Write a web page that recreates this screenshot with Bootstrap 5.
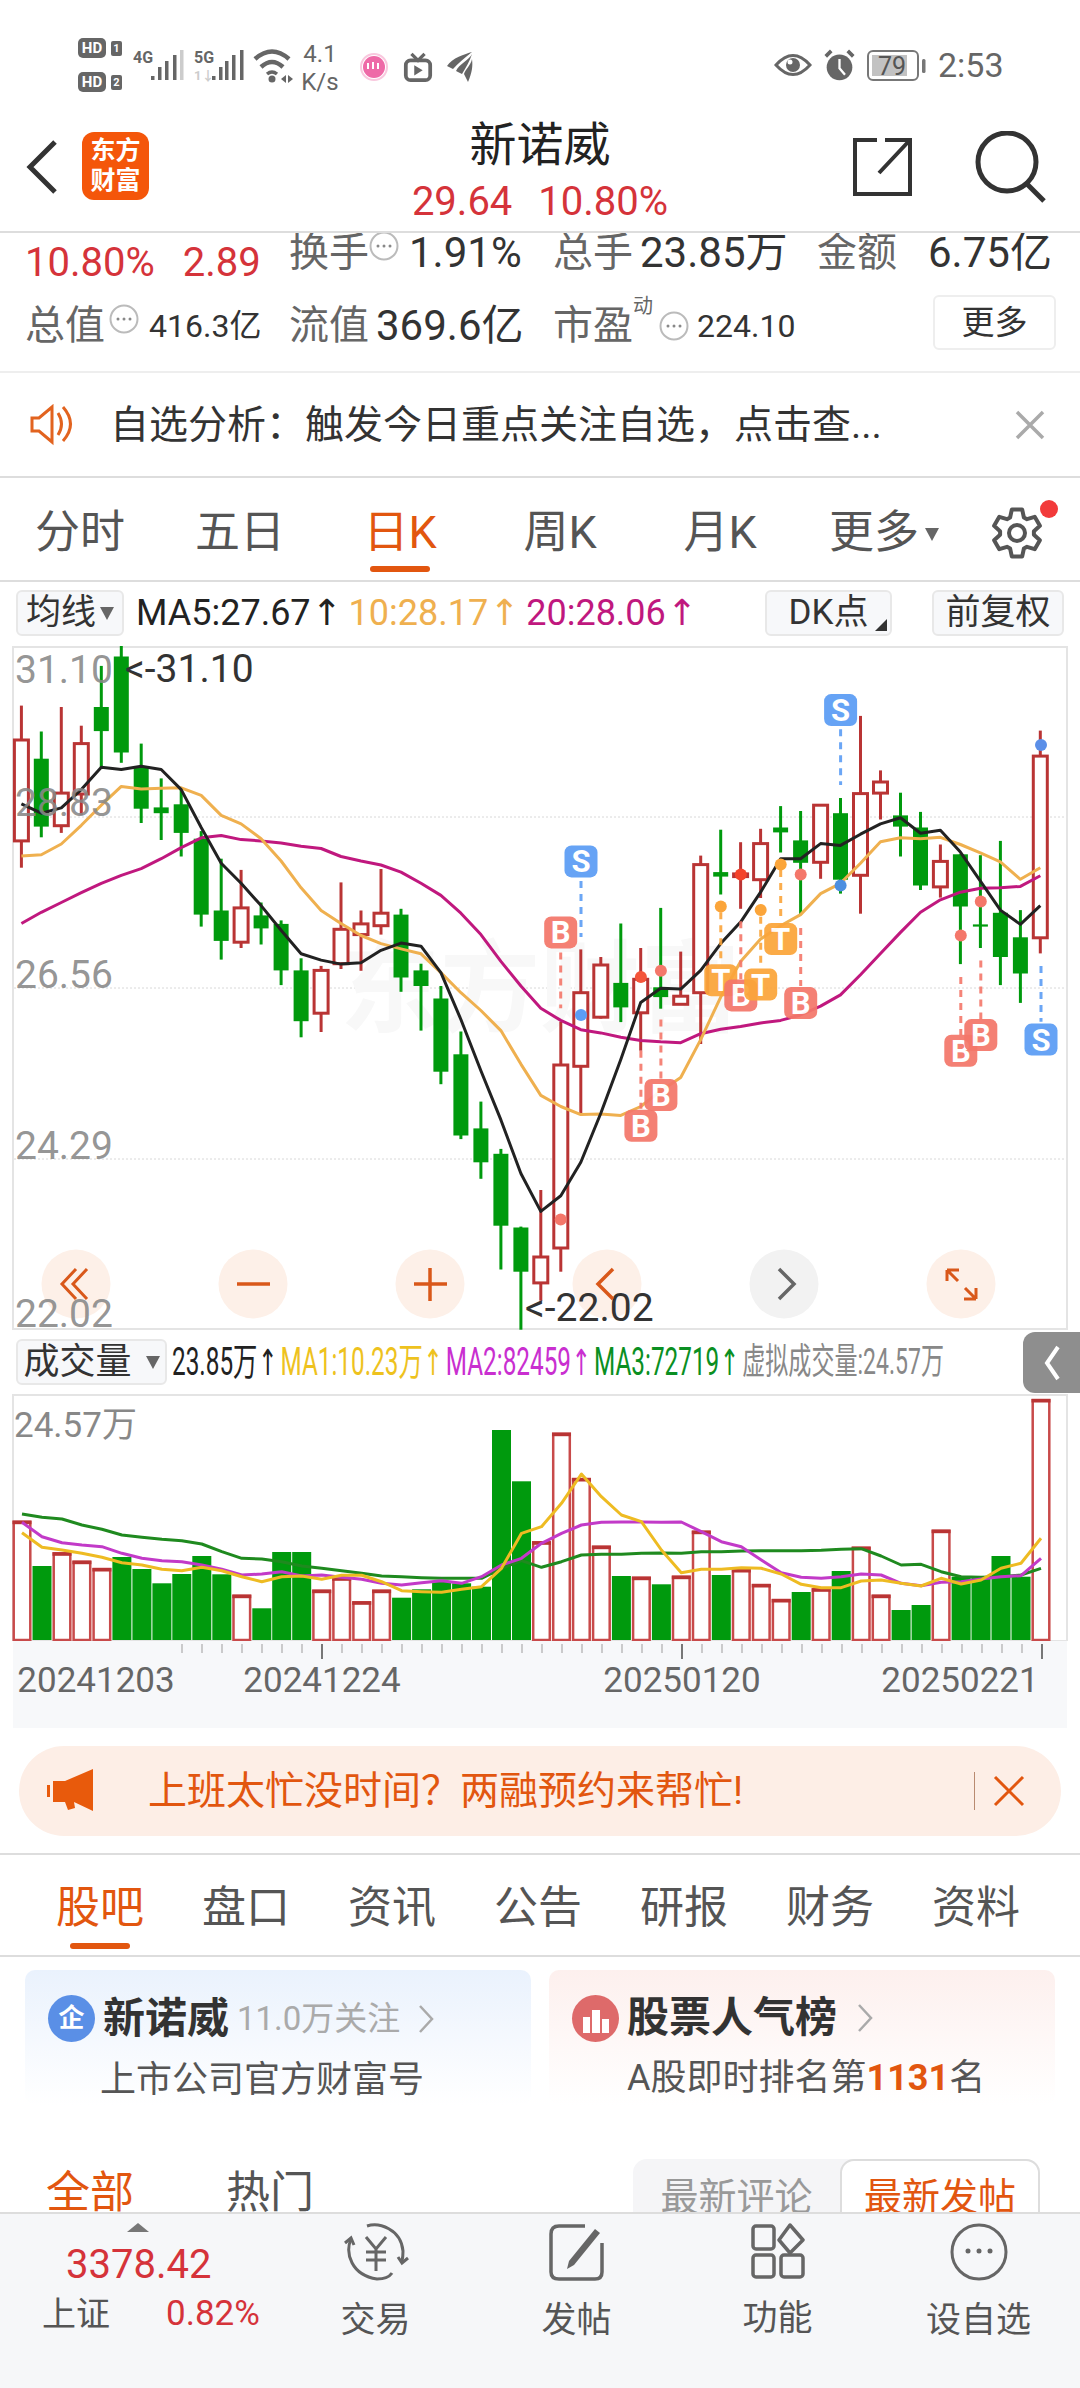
<!DOCTYPE html>
<html lang="zh-CN">
<head>
<meta charset="UTF-8">
<meta name="viewport" content="width=device-width, initial-scale=1.0">
<title>新诺威</title>
<link href="https://cdn.jsdelivr.net/npm/bootstrap@5.3.0/dist/css/bootstrap.min.css" rel="stylesheet">
<style>
html, body { width: 1080px; height: 2388px; overflow: hidden; }
body { font-family: Roboto, "Noto Sans CJK SC", sans-serif; color: #333; background: #fff; }
svg text { font-family: Roboto, "Noto Sans CJK SC", sans-serif; }
svg { flex: none; }
.page-main { height: 2212px; overflow: hidden; position: relative; }

/* status bar */
.status-bar { height: 90px; padding: 38px 78px 0 78px; color: #666; }
.hd-col { width: 48px; gap: 12px; }
.hd-item { height: 22px; gap: 5px; }
.hd-tag { background: #666; color: #fff; font: 700 15px/20px Roboto, sans-serif; border-radius: 5px; width: 28px; height: 20px; text-align: center; }
.hd-num { background: #666; color: #fff; font: 700 11px/15px Roboto, sans-serif; border-radius: 2px; width: 11px; height: 15px; text-align: center; margin-top: 3px; }
.net-4g { margin: 10px 0 0 7px; }
.net-5g { margin-top: 10px; }
.net-wifi { margin: 10px 0 0 4px; }
.speed { font-size: 24px; line-height: 28px; width: 42px; text-align: center; color: #666; margin: 2px 0 0 -2px; white-space: nowrap; }
.ic-pink { margin: 15px 0 0 19px; }
.ic-tv { margin: 14px 0 0 15px; }
.ic-wing { margin: 14px 0 0 14px; }
.status-right { gap: 11px; margin-top: 7px; }
.clock { font-size: 34px; line-height: 40px; color: #666; width: 64px; }

/* top nav */
.top-nav { height: 143px; border-bottom: 2px solid #ddd; position: relative; }
.back-ic { margin: 50px 0 0 25px; }
.brand-tile { width: 67px; height: 68px; background: #f4560a; border-radius: 12px; color: #fff; font-weight: 700; font-size: 25px; line-height: 30px; text-align: center; padding-top: 4px; margin: 42px 0 0 21px; }
.nav-center { padding-top: 28px; pointer-events: none; }
.nav-title { font-size: 47px; line-height: 54px; color: #222; }
.nav-quote { font-size: 40px; line-height: 44px; color: #d5333a; margin-top: 8px; }
.nav-quote span + span { margin-left: 26px; }
.share-ic { margin-top: 47px; }
.search-ic { margin: 41px 32px 0 60px; }

/* stats */
.stat-block { height: 140px; border-bottom: 2px solid #eee; position: relative; overflow: hidden; }
.stat-row { display: grid; grid-template-columns: 264px 264px 264px 1fr; padding-left: 25px; align-items: center; }
.stat-row-a { height: 44px; margin-top: -12px; }
.stat-row-b { height: 60px; margin-top: 31px; }
.quote-cell { margin-top: 20px; white-space: nowrap; }
.st-key { font-size: 40px; color: #666; line-height: 44px; }
.st-val { font-size: 42px; color: #333; line-height: 44px; white-space: nowrap; }
.st-val-s { font-size: 32px; color: #333; line-height: 44px; white-space: nowrap; }
.st-red { font-size: 40px; color: #d5333a; line-height: 44px; }
.st-red + .st-red { margin-left: 28px; }
.more-btn { position: absolute; right: 24px; top: 62px; width: 123px; height: 55px; border: 2px solid #eee; border-radius: 6px; font-size: 33px; line-height: 50px; text-align: center; color: #333; background: #fff; padding: 0; }
.sup-mark { font-size: 20px; color: #666; position: relative; top: -20px; line-height: 0; }
.ring-a { margin: -14px 10px 0 0; }
.ring-b { margin: -14px 10px 0 4px; }
.ring-c { margin: 0 8px 0 6px; }
.gap-val-a { margin-left: 7px; }
.gap-val-b { margin-left: 31px; }

/* notice */
.notice-row { height: 105px; border-bottom: 2px solid #ddd; padding: 0 30px; }
.notice-text { font-size: 39px; line-height: 46px; color: #333; margin-left: 30px; white-space: nowrap; }
.notice-x { margin-right: 5px; }

/* period tabs */
.tab-strip { height: 104px; border-bottom: 2px solid #ddd; }
.tab-cell { width: 160px; text-align: center; font-size: 45px; line-height: 50px; color: #555; position: relative; padding-top: 30px; white-space: nowrap; }
.tab-cell.on { color: #e2560f; }
.tab-cell.on::after { content: ""; position: absolute; left: 50%; margin-left: -30px; top: 88px; width: 60px; height: 6px; border-radius: 3px; background: #e2560f; }
.tab-more { padding-left: 8px; }
.tri-down { display: inline-block; width: 0; height: 0; border-left: 7px solid transparent; border-right: 7px solid transparent; border-top: 13px solid #666; vertical-align: middle; }
.tab-cell .tri-down { margin: 0 0 4px 6px; }
.gear-cell { width: 120px; position: relative; padding-top: 29px; padding-left: 31px; }
.red-dot { position: absolute; left: 80px; top: 22px; width: 18px; height: 18px; background: #f23a3a; border-radius: 50%; }

/* ma row */
.ma-row { height: 64px; padding: 8px 16px 0 16px; }
.chip { background: #f7f8fa; border: 2px solid #e8e8e8; border-radius: 6px; color: #333; font-size: 35px; line-height: 42px; height: 46px; text-align: center; white-space: nowrap; flex: none; position: relative; }
.chip-ma { width: 108px; }
.chip-ma .tri-down { margin: 0 0 2px 4px; }
.chip-dk { width: 127px; }
.chip-dk svg { position: absolute; right: 3px; bottom: 3px; }
.chip-fq { width: 132px; margin-left: 40px; }
.chip-vol { width: 151px; display: flex; align-items: center; justify-content: center; font-size: 36px; }
.chip-vol .tri-down { margin-left: 14px; }
.ma-text { font-size: 36px; line-height: 46px; white-space: nowrap; margin-left: 12px; gap: 6px; }
.ma-arrow { display: inline-block; width: 32px; text-align: center; font-family: "DejaVu Sans", sans-serif; font-size: 36px; font-weight: 400; }
.c-black { color: #222; }
.c-orange { color: #efb04f; }
.c-magenta { color: #c0187e; }
.c-mustard { color: #eec21e; }
.c-violet { color: #c92fd0; }
.c-leaf { color: #0a8f22; }

.chart-svg { display: block; width: 1080px; }
.vol-legend { height: 64px; position: relative; padding: 9px 0 0 16px; }
.vol-items { font-size: 38px; line-height: 46px; white-space: nowrap; margin-left: 5px; gap: 4px; transform: scaleX(.64); transform-origin: 0 50%; }
.vol-note { color: #888; font-size: 36px; }
.vol-handle { position: absolute; right: 0; top: 2px; width: 57px; height: 61px; background: #8e8e8e; border-radius: 12px 0 0 12px; display: flex; align-items: center; justify-content: center; }
.axis-wrap { height: 87px; margin: 0 13px; background: #f7f8fa; }

/* promo */
.promo-pill { height: 90px; margin: 18px 19px 17px 19px; background: #fdeee6; border-radius: 45px; padding: 0 36px 0 28px; color: #e2560f; }
.promo-text { font-size: 39px; margin-left: 55px; line-height: 46px; white-space: nowrap; }
.promo-sep { width: 1px; height: 38px; background: #b98a70; margin-right: 18px; }

/* lower tabs */
.sub-tabs { height: 104px; border-top: 2px solid #ddd; border-bottom: 2px solid #ddd; display: grid; grid-template-columns: 27px repeat(7, 146px) 1fr; }
.sub-cell { text-align: center; font-size: 44px; line-height: 50px; color: #555; position: relative; padding-top: 28px; }
.sub-cell.on { color: #e2560f; }
.sub-cell.on::after { content: ""; position: absolute; left: 50%; margin-left: -30px; top: 88px; width: 60px; height: 6px; border-radius: 3px; background: #e2560f; }

/* cards */
.promo-cards { padding: 13px 24px 0 25px; gap: 18px; height: 190px; }
.info-tile { width: 506px; height: 135px; border-radius: 10px; padding: 24px 22px 0 23px; }
.tile-blue { background: linear-gradient(#eaf2fd, #fff); }
.tile-red { background: linear-gradient(#fdf0ee, #fff); }
.tile-round { width: 47px; height: 47px; border-radius: 50%; color: #fff; font-size: 26px; line-height: 47px; text-align: center; flex: none; font-weight: 700; }
.round-blue { background: #5a8fe6; }
.round-red { background: #de6a6a; }
.tile-head { font-size: 42px; font-weight: 700; line-height: 48px; color: #333; margin-left: 8px; white-space: nowrap; }
.tile-sub-mark { font-size: 33px; color: #aaa; margin-left: 8px; white-space: nowrap; }
.tile-chev { margin-left: 18px; }
.tile-chev-b { margin-left: 20px; }
.tile-sub { font-size: 36px; line-height: 44px; color: #555; margin: 14px 0 0 52px; white-space: nowrap; }
.tile-sub-b { margin-left: 55px; }
.tile-sub b { color: #e2560f; font-weight: 700; }

/* feed tabs */
.feed-row { height: 60px; padding: 0 40px 0 46px; margin-top: 12px; }
.feed-tab { font-size: 44px; line-height: 60px; color: #555; margin-right: 92px; padding-top: 4px; }
.feed-tab.on { color: #e2560f; }
.seg-box { width: 407px; height: 80px; background: #f5f5f7; border-radius: 14px; font-size: 38px; }
.seg-off { width: 207px; color: #999; text-align: center; line-height: 76px; }
.seg-on { width: 200px; color: #e2560f; text-align: center; background: #fff; border: 2px solid #ddd; border-radius: 14px; line-height: 72px; }

/* bottom bar */
.foot-bar { height: 176px; background: #f6f7f9; border-top: 2px solid #ddd; }
.foot-quote { width: 275px; position: relative; padding: 30px 0 0 42px; }
.foot-up { width: 0; height: 0; border-left: 11px solid transparent; border-right: 11px solid transparent; border-bottom: 9px solid #777; margin: -21px 0 0 85px; }
.foot-index { font-size: 40px; line-height: 44px; color: #d5333a; margin: 11px 0 0 24px; }
.foot-sub { margin-top: 5px; }
.foot-pct { font-size: 35px; line-height: 44px; color: #d5333a; margin-left: 56px; }
.foot-name { font-size: 34px; line-height: 44px; color: #555; }
.foot-item { width: 201px; text-align: center; padding-top: 9px; color: #555; font-size: 35px; line-height: 40px; }
.foot-item svg { display: block; margin: 0 auto 20px auto; }
</style>
</head>
<body>
<div class="page-main">
  <!-- status bar -->
  <div class="status-bar d-flex align-items-start">
    <div class="d-flex flex-column hd-col">
      <div class="d-flex hd-item"><div class="hd-tag">HD</div><div class="hd-num">1</div></div>
      <div class="d-flex hd-item"><div class="hd-tag">HD</div><div class="hd-num">2</div></div>
    </div>
    <svg class="net-4g" width="56" height="34" viewBox="0 0 56 34">
      <text x="0" y="15" font-size="16" font-weight="700" fill="#666">4G</text>
      <g fill="#666"><rect x="18" y="28" width="3.5" height="4"/><rect x="25" y="19" width="3.5" height="13"/><rect x="32" y="13" width="3.5" height="19"/><rect x="40" y="7" width="3.5" height="25"/><rect x="47" y="2" width="3.5" height="30" fill="#ccc"/></g>
    </svg>
    <svg class="net-5g" width="60" height="34" viewBox="0 0 60 34">
      <text x="5" y="15" font-size="16" font-weight="700" fill="#666">5G</text>
      <text x="5" y="32" font-size="13" font-weight="700" fill="#ccc">1↓</text>
      <g fill="#666"><rect x="23" y="28" width="3.5" height="4"/><rect x="30" y="19" width="3.5" height="13"/><rect x="36" y="13" width="3.5" height="19"/><rect x="43" y="7" width="3.5" height="25"/><rect x="51" y="2" width="3.5" height="30"/></g>
    </svg>
    <svg class="net-wifi" width="48" height="36" viewBox="0 0 48 36" fill="none" stroke="#666" stroke-width="4.5">
      <path d="M2 11 Q19 -4 36 11"/><path d="M8 19 Q19 9 30 19"/><path d="M14 26 Q19 22 24 26" stroke-width="3.5"/>
      <circle cx="19" cy="31" r="3.5" fill="#666" stroke="none"/>
      <path d="M28 31l5-4v8zM35 27l5 4-5 4z" fill="#666" stroke="none"/>
    </svg>
    <div class="speed">4.1<br>K/s</div>
    <svg class="ic-pink" width="28" height="28" viewBox="0 0 28 28"><circle cx="14" cy="14" r="11" fill="#ee6aa7"/><circle cx="14" cy="14" r="13" fill="none" stroke="#f9c8de" stroke-width="2"/><path d="M8 10v6M13 9v7M18 10v6" stroke="#fff" stroke-width="2"/></svg>
    <svg class="ic-tv" width="30" height="30" viewBox="0 0 30 32"><path d="M8 2l7 7 7-7" fill="none" stroke="#666" stroke-width="3.5"/><rect x="2" y="9" width="26" height="21" rx="5" fill="none" stroke="#666" stroke-width="4"/><path d="M11 14v11l9-5.5z" fill="#666"/></svg>
    <svg class="ic-wing" width="26" height="30" viewBox="0 0 26 30"><path d="M25 0C18 2 5 6 0 14l6 3C11 11 18 6 25 0zM25 2C22 8 12 12 9 19l6 3C19 15 23 9 25 2zM25 7C24 13 18 18 17 22l4 8C25 21 26 14 25 7z" fill="#666"/></svg>
    <div class="ms-auto d-flex align-items-center status-right">
      <svg width="38" height="24" viewBox="0 0 38 24"><path d="M2 12Q19 -7 36 12Q19 31 2 12z" fill="none" stroke="#666" stroke-width="3"/><circle cx="19" cy="12" r="7" fill="#666"/><circle cx="16" cy="9" r="2.5" fill="#fff"/></svg>
      <svg width="33" height="33" viewBox="0 0 36 36"><circle cx="18" cy="20" r="14" fill="#666"/><path d="M18 11v10l6 7" fill="none" stroke="#fff" stroke-width="2.5"/><path d="M3 8l6-6M33 8l-6-6" stroke="#666" stroke-width="4"/></svg>
      <svg width="60" height="31" viewBox="0 0 60 31"><rect x="1" y="1" width="50" height="29" rx="5" fill="none" stroke="#777" stroke-width="2"/><rect x="5" y="5" width="35" height="21" fill="#c2c2c2"/><text x="11" y="25" font-size="25" fill="#555">79</text><rect x="55" y="9" width="3.5" height="14" rx="1.5" fill="#777"/></svg>
      <div class="clock">2:53</div>
    </div>
  </div>

  <!-- top nav -->
  <div class="top-nav d-flex">
    <svg class="back-ic" width="36" height="54" viewBox="0 0 36 54"><path d="M30 2L5 27l25 25" fill="none" stroke="#333" stroke-width="5"/></svg>
    <div class="brand-tile">东方<br>财富</div>
    <div class="position-absolute top-0 start-0 w-100 text-center nav-center">
      <div class="nav-title">新诺威</div>
      <div class="nav-quote"><span>29.64</span><span>10.80%</span></div>
    </div>
    <div class="ms-auto d-flex">
      <svg class="share-ic" width="62" height="60" viewBox="0 0 62 60" fill="none" stroke="#333" stroke-width="4"><path d="M25 3H3v54h55V25"/><path d="M33 3h25v24M57 4L27 36"/></svg>
      <svg class="search-ic" width="74" height="72" viewBox="0 0 74 72"><circle cx="33" cy="31" r="29" fill="none" stroke="#333" stroke-width="5"/><path d="M53 53l17 17" stroke="#333" stroke-width="5"/></svg>
    </div>
  </div>

  <!-- stats -->
  <div class="stat-block">
    <div class="stat-row stat-row-a">
      <div class="quote-cell"><span class="st-red">10.80%</span><span class="st-red">2.89</span></div>
      <div class="d-flex align-items-center"><span class="st-key">换手</span><svg class="ring-a" width="30" height="30" viewBox="0 0 30 30"><use href="#dotRing"/></svg><span class="st-val">1.91%</span></div>
      <div class="d-flex align-items-center"><span class="st-key">总手</span><span class="st-val gap-val-a">23.85万</span></div>
      <div class="d-flex align-items-center"><span class="st-key">金额</span><span class="st-val gap-val-b">6.75亿</span></div>
    </div>
    <div class="stat-row stat-row-b">
      <div class="d-flex align-items-center"><span class="st-key">总值</span><svg class="ring-b" width="30" height="30" viewBox="0 0 30 30"><use href="#dotRing"/></svg><span class="st-val-s">416.3亿</span></div>
      <div class="d-flex align-items-center"><span class="st-key">流值</span><span class="st-val gap-val-a">369.6亿</span></div>
      <div class="d-flex align-items-center"><span class="st-key">市盈</span><span class="sup-mark">动</span><svg class="ring-c" width="30" height="30" viewBox="0 0 30 30"><use href="#dotRing"/></svg><span class="st-val-s">224.10</span></div>
    </div>
    <button class="more-btn" type="button">更多</button>
  </div>

  <!-- notice -->
  <div class="notice-row d-flex align-items-center">
    <svg width="50" height="42" viewBox="0 0 50 42" fill="none" stroke="#e2631f" stroke-width="3"><path d="M2 14h7L22 3v35L9 27H2z"/><path d="M28 9q7 11 0 22M33 3q15 17 0 34"/></svg>
    <div class="notice-text">自选分析：触发今日重点关注自选，点击查...</div>
    <svg class="ms-auto notice-x" width="30" height="30" viewBox="0 0 30 30"><path d="M2 2l26 26M28 2L2 28" stroke="#aaa" stroke-width="3.5"/></svg>
  </div>

  <!-- period tabs -->
  <div class="tab-strip d-flex">
    <div class="tab-cell">分时</div>
    <div class="tab-cell">五日</div>
    <div class="tab-cell on">日K</div>
    <div class="tab-cell">周K</div>
    <div class="tab-cell">月K</div>
    <div class="tab-cell tab-more">更多<span class="tri-down"></span></div>
    <div class="gear-cell">
      <svg width="52" height="52" viewBox="0 0 52 52"><path id="gearPath" fill="none" stroke="#555" stroke-width="4" stroke-linejoin="round"/><circle cx="26" cy="26" r="8" fill="none" stroke="#555" stroke-width="4"/></svg>
      <span class="red-dot"></span>
    </div>
  </div>

  <!-- ma row -->
  <div class="ma-row d-flex">
    <div class="chip chip-ma">均线<span class="tri-down"></span></div>
    <div class="ma-text d-flex">
      <span class="c-black">MA5:27.67<span class="ma-arrow">↑</span></span>
      <span class="c-orange">10:28.17<span class="ma-arrow">↑</span></span>
      <span class="c-magenta">20:28.06<span class="ma-arrow">↑</span></span>
    </div>
    <div class="chip chip-dk ms-auto">DK点<svg width="12" height="12" viewBox="0 0 12 12"><path d="M12 0v12H0z" fill="#333"/></svg></div>
    <div class="chip chip-fq">前复权</div>
  </div>

  <!-- k chart -->
  <svg id="kChart" class="chart-svg" height="684" viewBox="0 0 1080 684"></svg>

  <!-- volume legend -->
  <div class="vol-legend d-flex">
    <div class="chip chip-vol">成交量<span class="tri-down"></span></div>
    <div class="vol-items d-flex">
      <span class="c-black">23.85万<span class="ma-arrow">↑</span></span>
      <span class="c-mustard">MA1:10.23万<span class="ma-arrow">↑</span></span>
      <span class="c-violet">MA2:82459<span class="ma-arrow">↑</span></span>
      <span class="c-leaf">MA3:72719<span class="ma-arrow">↑</span></span>
      <span class="vol-note">虚拟成交量:24.57万</span>
    </div>
    <div class="vol-handle"><svg width="18" height="36" viewBox="0 0 18 36"><path d="M15 2L4 18l11 16" fill="none" stroke="#fff" stroke-width="4"/></svg></div>
  </div>

  <!-- volume chart -->
  <svg id="volChart" class="chart-svg" height="247" viewBox="0 0 1080 247"></svg>

  <div class="axis-wrap">
    <svg id="axisSvg" width="1054" height="87" viewBox="13 0 1054 87"></svg>
  </div>

  <!-- promo -->
  <div class="promo-pill d-flex align-items-center">
    <svg width="46" height="46" viewBox="0 0 46 46"><path d="M0 17h3v12H0zM6 13h12L46 1v42L27 34l1 6-7 2-3-8H6z" fill="#e85a0c"/></svg>
    <div class="promo-text">上班太忙没时间？两融预约来帮忙!</div>
    <div class="ms-auto d-flex align-items-center">
      <div class="promo-sep"></div>
      <svg width="32" height="32" viewBox="0 0 32 32"><path d="M2 2l28 28M30 2L2 30" stroke="#e2560f" stroke-width="3"/></svg>
    </div>
  </div>

  <!-- lower tabs -->
  <div class="sub-tabs">
    <div></div>
    <div class="sub-cell on">股吧</div>
    <div class="sub-cell">盘口</div>
    <div class="sub-cell">资讯</div>
    <div class="sub-cell">公告</div>
    <div class="sub-cell">研报</div>
    <div class="sub-cell">财务</div>
    <div class="sub-cell">资料</div>
  </div>

  <!-- cards -->
  <div class="promo-cards d-flex">
    <div class="info-tile tile-blue">
      <div class="d-flex align-items-center">
        <div class="tile-round round-blue">企</div>
        <div class="tile-head">新诺威</div>
        <div class="tile-sub-mark">11.0万关注</div>
        <svg class="tile-chev" width="16" height="30" viewBox="0 0 16 30"><path d="M2 2l12 13L2 28" fill="none" stroke="#aaa" stroke-width="2.5"/></svg>
      </div>
      <div class="tile-sub">上市公司官方财富号</div>
    </div>
    <div class="info-tile tile-red">
      <div class="d-flex align-items-center">
        <div class="tile-round round-red"><svg width="30" height="26" viewBox="0 0 30 26" fill="#fff"><rect x="2" y="10" width="7" height="16"/><rect x="11" y="3" width="8" height="23"/><rect x="21" y="12" width="7" height="14"/></svg></div>
        <div class="tile-head">股票人气榜</div>
        <svg class="tile-chev-b" width="16" height="30" viewBox="0 0 16 30"><path d="M2 2l12 13L2 28" fill="none" stroke="#aaa" stroke-width="2.5"/></svg>
      </div>
      <div class="tile-sub tile-sub-b">A股即时排名第<b>1131</b>名</div>
    </div>
  </div>

  <!-- feed tabs -->
  <div class="feed-row d-flex">
    <div class="feed-tab on">全部</div>
    <div class="feed-tab">热门</div>
    <div class="seg-box ms-auto d-flex">
      <div class="seg-off">最新评论</div>
      <div class="seg-on">最新发帖</div>
    </div>
  </div>
</div>

<!-- bottom bar -->
<div class="foot-bar d-flex">
  <div class="foot-quote">
    <div class="foot-up"></div>
    <div class="foot-index">3378.42</div>
    <div class="d-flex foot-sub"><span class="foot-name">上证</span><span class="foot-pct">0.82%</span></div>
  </div>
  <div class="foot-item">
    <svg width="66" height="58" viewBox="0 0 66 58" fill="none" stroke="#666" stroke-width="3"><path d="M8 16C2 30 8 52 34 56c8 0 13-3 15-6M24 3C36 -1 58 6 60 28c0 3 0 6-1 10"/><path d="M2 20l6-5 3 7M55 34l4 6 6-5" /><path d="M23 14l10 12 10-12M33 26v22M23 29h20M23 37h20"/></svg>
    交易
  </div>
  <div class="foot-item">
    <svg width="56" height="58" viewBox="0 0 56 58" fill="none" stroke="#666" stroke-width="3.5"><path d="M36 3H10Q2 3 2 11v38q0 7 8 7h36q7 0 7-7V20"/><path d="M20 38L46 6l5 4-26 32-7 4z" fill="#666" stroke="none"/></svg>
    发帖
  </div>
  <div class="foot-item">
    <svg width="54" height="56" viewBox="0 0 54 56" fill="none" stroke="#666" stroke-width="3.5"><rect x="2" y="3" width="21" height="23" rx="3"/><path d="M39 2l13 15-13 13-11-13z" stroke-linejoin="round"/><rect x="2" y="32" width="21" height="22" rx="3"/><rect x="30" y="32" width="22" height="22" rx="3"/></svg>
    功能
  </div>
  <div class="foot-item">
    <svg width="58" height="58" viewBox="0 0 58 58" fill="none" stroke="#666" stroke-width="3"><circle cx="29" cy="29" r="27"/><circle cx="18" cy="28" r="2.5" fill="#666" stroke="none"/><circle cx="29" cy="28" r="2.5" fill="#666" stroke="none"/><circle cx="40" cy="28" r="2.5" fill="#666" stroke="none"/></svg>
    设自选
  </div>
</div>

<svg width="0" height="0" class="position-absolute"><defs>
  <g id="dotRing"><circle cx="15" cy="15" r="13.5" fill="none" stroke="#bbb" stroke-width="2"/><circle cx="9" cy="15" r="1.5" fill="#888"/><circle cx="15" cy="15" r="1.5" fill="#888"/><circle cx="21" cy="15" r="1.5" fill="#888"/></g>
</defs></svg>

<script>
  // Daily candles: [up, high, top, bottom, low], y in reference crop units
  const candles = [
    [1,147,224,450,510],[0,205,266,418,442],[1,150,343,416,432],[1,192,232,345,392],[0,58,150,204,285],
    [0,13,37,252,275],[0,232,285,378,410],[0,310,375,388,448],[0,330,368,432,485],[0,428,445,615,642],
    [0,490,606,674,716],[1,515,600,677,690],[0,588,617,646,682],[0,628,636,740,773],[0,713,740,854,890],
    [1,730,740,836,878],[1,543,648,725,737],[1,606,636,660,741],[1,513,612,640,660],[0,602,615,756,788],
    [0,725,740,775,875],[0,775,803,967,995],[0,877,928,1110,1118],[0,1034,1094,1170,1207],[0,1140,1151,1312,1410],
    [0,1314,1316,1415,1545],[1,1232,1382,1440,1480],[1,855,952,1362,1415],[1,693,790,955,1060],[1,710,728,845,848],
    [0,635,768,823,856],[1,690,760,835,920],[0,600,778,800,826],[1,698,798,816,816],[1,483,503,790,905],
    [0,425,520,530,570],[1,453,524,530,602],[1,423,456,537,578],[0,372,420,431,476],[0,383,449,499,615],
    [1,370,370,498,535],[0,354,388,537,568],[1,170,344,527,613],[1,292,318,343,402],[0,342,393,418,485],
    [0,385,420,550,560],[1,458,496,553,577],[0,480,480,597,726],[0,482,637,642,690],[0,450,611,710,773],
    [0,605,666,747,813],[1,203,260,667,702]
  ];
  const ma5 = [367,388,376,335,285,290,283,290,335,420,500,545,595,650,703,717,726,723,695,679,686,745,850,965,1075,1195,1280,1245,1170,1060,940,812,780,782,740,680,632,565,490,490,456,460,435,412,398,433,426,475,540,605,637,595];
  const ma10 = [484,481,457,415,370,328,334,332,331,348,393,412,445,495,555,606,635,662,680,692,703,745,790,830,875,950,1020,1045,1063,1062,1065,1045,1010,980,895,800,720,670,640,615,568,545,500,452,443,445,442,458,477,497,536,510];
  const ma20 = [635,610,588,566,545,527,512,490,465,443,438,447,450,455,462,467,485,495,504,520,545,572,612,660,720,775,825,852,873,880,890,897,900,902,882,872,866,858,852,840,820,795,750,702,655,610,582,565,556,555,552,528];

  const volBars = [[1,605],[0,738],[1,700],[1,725],[1,747],[0,711],[0,747],[0,790],[0,762],[0,708],[0,763],[1,827],[0,865],[0,696],[0,696],[1,812],[1,775],[1,847],[1,812],[0,833],[0,808],[0,783],[0,790],[0,800],[0,330],[0,484],[1,667],[1,341],[1,477],[1,680],[0,768],[1,773],[0,793],[1,770],[1,635],[0,765],[1,750],[1,795],[1,840],[0,816],[1,808],[0,753],[1,683],[1,827],[0,870],[0,855],[1,632],[0,770],[0,770],[0,708],[0,770],[1,240]];
  const volMa1 = [638,682,690,700,712,728,735,748,752,742,752,770,785,770,768,778,766,766,785,812,815,817,808,800,745,640,620,550,462,530,585,605,690,758,748,748,743,745,762,793,803,803,783,780,790,798,775,792,780,745,730,655];
  const volMa2 = [607,650,668,675,680,700,715,722,725,735,748,765,762,755,768,765,772,778,790,795,788,782,790,770,735,715,670,640,615,607,606,606,607,606,635,665,680,720,758,772,775,770,762,765,790,797,787,785,777,770,767,715];
  const volMa3 = [582,592,597,615,628,645,652,658,662,672,695,715,717,725,738,745,752,760,768,770,773,775,775,775,745,722,742,725,705,703,703,700,699,700,695,695,693,692,692,692,691,688,686,708,735,733,755,770,772,770,765,745];

  const kX = i => +(21.35 + 19.98 * i).toFixed(1);
  const kY = z => +(z / 2.24 - 6).toFixed(1);
  const rightX = z => +(540 + z / 2.904).toFixed(1);
  const RED = '#b93434', GREEN = '#009a0d';

  function polyline(xs, ys, color, width) {
    const pts = ys.map((y, i) => xs(i) + ',' + y).join(' ');
    return `<polyline points="${pts}" fill="none" stroke="${color}" stroke-width="${width}" stroke-linejoin="round"/>`;
  }

  function drawKChart() {
    let s = `<rect x="13" y="1" width="1054" height="682" fill="#fff" stroke="#e4e4e4" stroke-width="2"/>`;
    [171, 342, 513].forEach(y => {
      s += `<line x1="14" x2="1066" y1="${y}" y2="${y}" stroke="#d8d8d8" stroke-width="1" stroke-dasharray="2 2"/>`;
    });
    s += `<text x="340" y="378" font-size="100" font-weight="700" fill="#f8f8f8">东方财富</text>`;

    // zoom buttons sit behind the candles
    [[76,'#fdf0e8'],[253,'#fdf0e8'],[430,'#fdf0e8'],[607,'#fdf0e8'],[784,'#f2f2f2'],[961,'#fdf0e8']].forEach(b => {
      s += `<circle cx="${b[0]}" cy="638" r="34.5" fill="${b[1]}"/>`;
    });

    candles.forEach((c, i) => {
      const x = kX(i), color = c[0] ? RED : GREEN;
      s += `<line x1="${x}" x2="${x}" y1="${kY(c[1])}" y2="${kY(c[4])}" stroke="${color}" stroke-width="3"/>`;
      const top = kY(c[2]), h = (kY(c[3]) - top).toFixed(1);
      if (c[0]) s += `<rect x="${x - 7}" y="${top}" width="14" height="${h}" fill="#fff" stroke="${RED}" stroke-width="3"/>`;
      else s += `<rect x="${x - 7.5}" y="${top}" width="15" height="${h}" fill="${GREEN}"/>`;
    });

    s += polyline(kX, ma20.map(kY), '#c0187e', 3);
    s += polyline(kX, ma10.map(kY), '#efb04f', 3);
    s += polyline(kX, ma5.map(kY), '#222', 3);

    // price axis, baselines in chart px
    [['31.10',37],['28.83',170],['26.56',342],['24.29',513],['22.02',681]].forEach(l => {
      s += `<text x="15" y="${l[1]}" font-size="39" fill="#888" fill-opacity=".9">${l[0]}</text>`;
    });
    s += `<text x="125" y="36" font-size="39" fill="#333">&lt;-31.10</text>`;
    s += `<text x="525" y="675" font-size="39" fill="#333">&lt;-22.02</text>`;

    // button glyphs
    const o = '#d9581a';
    s += `<path d="M76 623L62 638l14 15M87 623L73 638l14 15" fill="none" stroke="${o}" stroke-width="3"/>`;
    s += `<path d="M237 638h33" stroke="${o}" stroke-width="3.5"/>`;
    s += `<path d="M414 638h33M430 622v33" stroke="${o}" stroke-width="3.5"/>`;
    s += `<path d="M613 623L598 638l15 15" fill="none" stroke="${o}" stroke-width="3.5"/>`;
    s += `<path d="M779 623l15 15-15 15" fill="none" stroke="#666" stroke-width="3.5"/>`;
    s += `<path d="M947 624h12M947 624v11M947 624l11 11M976 653h-12M976 653v-11M976 653l-11-11" fill="none" stroke="${o}" stroke-width="3"/>`;

    // trade marks: type, crop x, crop y, dash from, dash to
    const marks = [
      ['B',60,655,700,825],['S',119,496,540,665],['B',293,1088,920,1050],['B',351,1019,850,985],
      ['T',525,762,610,725],['B',583,796,630,760],['T',641,772,620,735],['T',699,670,515,630],
      ['B',757,813,645,775],['S',873,157,200,325],['B',1222,920,755,885],['B',1280,885,718,850],['S',1455,895,730,855]
    ];
    const tone = { B: '#f4776a', S: '#5b9df5', T: '#fba53a' };
    marks.forEach(m => {
      const x = rightX(m[1]);
      s += `<line x1="${x}" x2="${x}" y1="${kY(m[3])}" y2="${kY(m[4])}" stroke="${tone[m[0]]}" stroke-width="3" stroke-dasharray="7 6" opacity=".9"/>`;
    });
    [[60,1298,'#f4776a'],[293,755,'#f4553a'],[351,741,'#f4776a'],[583,525,'#f4432a'],[757,525,'#f4776a'],[1222,662,'#f4776a'],[1280,586,'#f4776a'],
     [119,840,'#5b9df5'],[873,550,'#4d8fe0'],[1455,235,'#5b8fe8'],[525,597,'#fba53a'],[641,605,'#fba53a'],[699,503,'#fba53a']].forEach(d => {
      s += `<ellipse cx="${rightX(d[0])}" cy="${kY(d[1])}" rx="6" ry="6" fill="${d[2]}"/>`;
    });
    marks.forEach(m => {
      const x = rightX(m[1]), y = kY(m[2]);
      s += `<g opacity=".93"><rect x="${x - 16.5}" y="${y - 16}" width="33" height="32" rx="7" fill="${tone[m[0]]}"/>`;
      s += `<text x="${x}" y="${y + 11}" text-anchor="middle" font-size="31" font-weight="700" fill="#fff">${m[0]}</text></g>`;
    });
    document.getElementById('kChart').innerHTML = s;
  }

  function drawVolChart() {
    const vY = z => +(z / 3 - 74).toFixed(1);
    const vX = i => +(22 + 19.98 * i).toFixed(1);
    const base = 246;
    let s = `<rect x="13" y="1" width="1054" height="246" fill="#fff" stroke="#e4e4e4" stroke-width="2"/>`;
    volBars.forEach((b, i) => {
      const x = vX(i) - 9.5, top = vY(b[1]), h = (base - top).toFixed(1);
      if (b[0]) {
        s += `<rect x="${x + 1.2}" y="${top}" width="16.6" height="${h}" fill="#fff" stroke="#c84a4a" stroke-width="2.5"/>`;
        s += `<rect x="${x}" y="${top - 1}" width="19" height="3.5" fill="${RED}"/>`;
      } else {
        s += `<rect x="${x}" y="${top}" width="19" height="${h}" fill="${GREEN}"/>`;
      }
    });
    s += polyline(vX, volMa3.map(vY), '#1f8a1f', 3);
    s += polyline(vX, volMa2.map(vY), '#c23ac8', 3);
    s += polyline(vX, volMa1.map(vY), '#eebb22', 3);
    s += `<text x="14" y="43" font-size="35" fill="#888">24.57万</text>`;
    document.getElementById('volChart').innerHTML = s;
  }

  function drawAxis() {
    let s = '';
    for (let x = 182; x <= 1042; x += 20) {
      const major = x == 322 || x == 682 || x == 1042;
      s += `<line x1="${x}" x2="${x}" y1="3" y2="${major ? 18 : 12}" stroke="${major ? '#777' : '#bbb'}" stroke-width="${major ? 2 : 1.5}"/>`;
    }
    [['20241203',96],['20241224',322],['20250120',682],['20250221',960]].forEach(l => {
      s += `<text x="${l[1]}" y="51" text-anchor="middle" font-size="35" fill="#666">${l[0]}</text>`;
    });
    document.getElementById('axisSvg').innerHTML = s;
  }

  function drawGear() {
    // six-tooth outline around the centre of a 52 box
    let d = '';
    for (let t = 0; t < 6; t++) {
      const a = t * Math.PI / 3;
      [[-.42,17],[-.22,24],[.22,24],[.42,17]].forEach((p, k) => {
        const x = 26 + p[1] * Math.sin(a + p[0]), y = 26 - p[1] * Math.cos(a + p[0]);
        d += (t == 0 && k == 0 ? 'M' : 'L') + x.toFixed(1) + ' ' + y.toFixed(1);
      });
    }
    document.getElementById('gearPath').setAttribute('d', d + 'Z');
  }

  drawKChart();
  drawVolChart();
  drawAxis();
  drawGear();
</script>
</body>
</html>
